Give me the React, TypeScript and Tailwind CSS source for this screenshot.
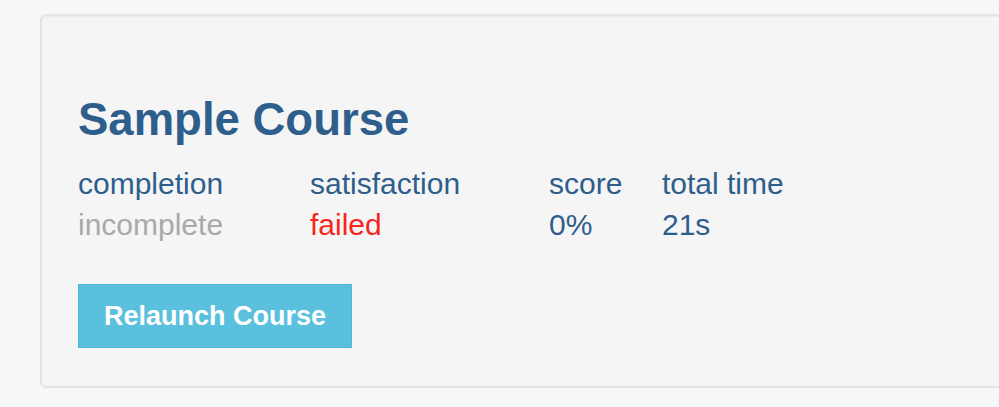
import React from "react";

const font = { fontFamily: '"Liberation Sans", Arial, Helvetica, sans-serif' };

export default function App() {
  const cols = [
    { label: "completion", value: "incomplete", w: "w-[232px]", vc: "text-[#a9a9a9]" },
    { label: "satisfaction", value: "failed", w: "w-[239px]", vc: "text-[#f5261b]" },
    { label: "score", value: "0%", w: "w-[113px]", vc: "text-[#2e5e8c]" },
    { label: "total time", value: "21s", w: "w-[200px]", vc: "text-[#2e5e8c]" },
  ];
  return (
    <div className="w-full h-[407px] overflow-hidden bg-[#f6f7f9]" style={font}>
      <div className="pt-[14px] pl-[40px]">
        <div className="w-[1000px] h-[374px] bg-[#f5f5f5] border-2 border-[#e3e3e3] rounded-md shadow-[inset_0_1px_2px_rgba(0,0,0,0.05)] pl-[36px] pt-[81px]">
          <h1 className="text-[45.5px] leading-[45px] font-bold text-[#2e5e8c]">Sample Course</h1>
          <div className="flex mt-[21px]">
            {cols.map((c) => (
              <div key={c.label} className={`${c.w} flex flex-col`}>
                <div className="text-[30px] leading-[41px] text-[#2e5e8c] whitespace-nowrap">{c.label}</div>
                <div className={`text-[30px] leading-[41px] whitespace-nowrap ${c.vc}`}>{c.value}</div>
              </div>
            ))}
          </div>
          <button className="mt-[39px] w-[274px] h-[64px] bg-[#5bc0de] border border-[#46b8da] text-white text-[27px] font-bold flex items-center justify-center">
            Relaunch Course
          </button>
        </div>
      </div>
    </div>
  );
}
